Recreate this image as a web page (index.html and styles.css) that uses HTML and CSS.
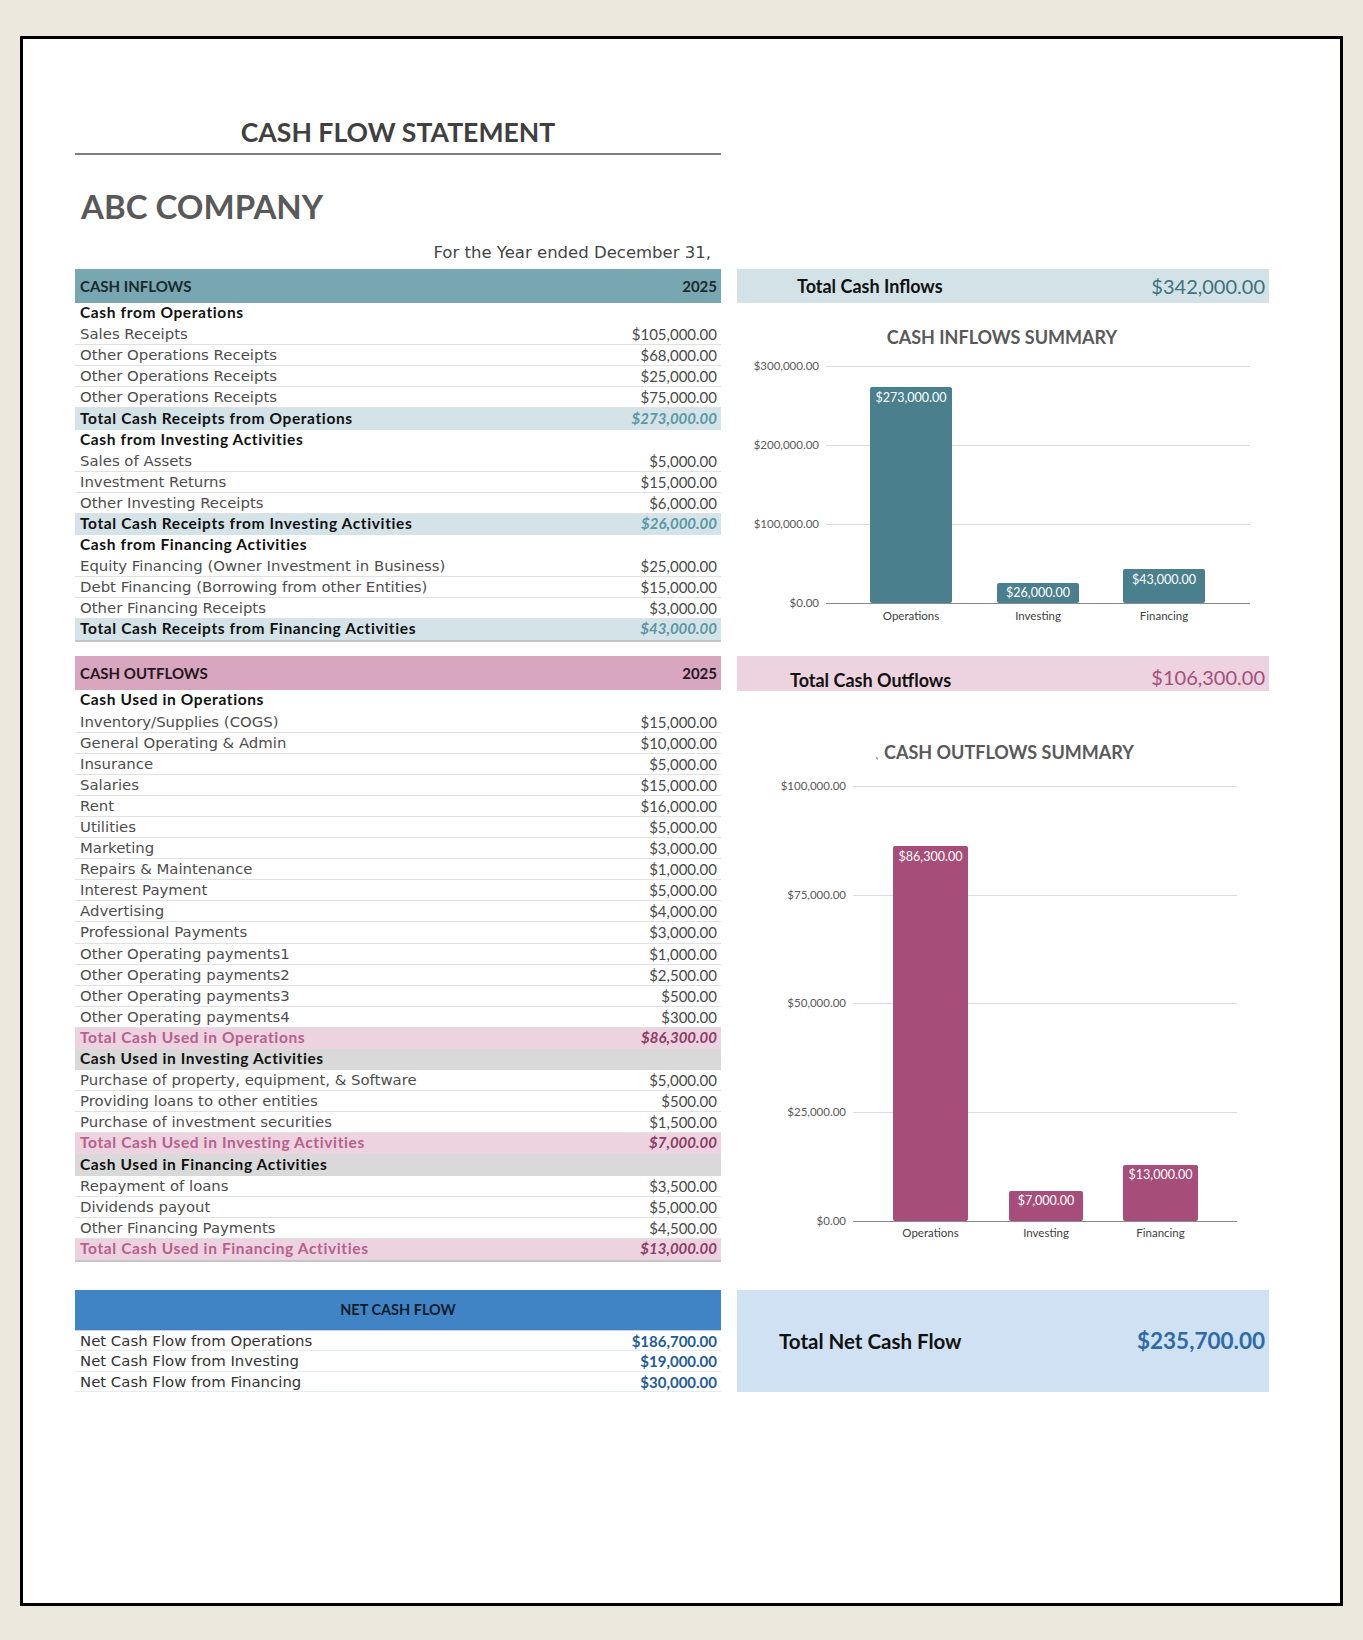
FILE: index.html
```html
<!DOCTYPE html>
<html lang="en">
<head>
<meta charset="utf-8">
<title>Cash Flow Statement</title>
<link rel="stylesheet" href="styles.css">
</head>
<body>
<div class="frame">
  <div class="sheet">
    <header class="head">
      <h1 class="title">CASH FLOW STATEMENT</h1>
      <h2 class="company">ABC COMPANY</h2>
      <p class="period">For the Year ended December 31,</p>
    </header>

    <div class="band">
      <section class="tbl">
        <div class="thead in"><span>CASH INFLOWS</span><span>2025</span></div>
        <div class="row sub"><span class="lbl">Cash from Operations</span></div>
        <div class="row item"><span class="lbl">Sales Receipts</span><span class="val">$105,000.00</span></div>
        <div class="row item"><span class="lbl">Other Operations Receipts</span><span class="val">$68,000.00</span></div>
        <div class="row item"><span class="lbl">Other Operations Receipts</span><span class="val">$25,000.00</span></div>
        <div class="row item"><span class="lbl">Other Operations Receipts</span><span class="val">$75,000.00</span></div>
        <div class="row tot-in"><span class="lbl">Total Cash Receipts from Operations</span><span class="val">$273,000.00</span></div>
        <div class="row sub"><span class="lbl">Cash from Investing Activities</span></div>
        <div class="row item"><span class="lbl">Sales of Assets</span><span class="val">$5,000.00</span></div>
        <div class="row item"><span class="lbl">Investment Returns</span><span class="val">$15,000.00</span></div>
        <div class="row item"><span class="lbl">Other Investing Receipts</span><span class="val">$6,000.00</span></div>
        <div class="row tot-in"><span class="lbl">Total Cash Receipts from Investing Activities</span><span class="val">$26,000.00</span></div>
        <div class="row sub"><span class="lbl">Cash from Financing Activities</span></div>
        <div class="row item"><span class="lbl">Equity Financing (Owner Investment in Business)</span><span class="val">$25,000.00</span></div>
        <div class="row item"><span class="lbl">Debt Financing (Borrowing from other Entities)</span><span class="val">$15,000.00</span></div>
        <div class="row item"><span class="lbl">Other Financing Receipts</span><span class="val">$3,000.00</span></div>
        <div class="row tot-in last"><span class="lbl">Total Cash Receipts from Financing Activities</span><span class="val">$43,000.00</span></div>
      </section>
      <aside class="side">
        <div class="sum-bar in"><span class="k">Total Cash Inflows</span><span class="v">$342,000.00</span></div>
        <svg class="chart" width="532" height="330" viewBox="0 0 532 330">
          <text class="ct" x="265" y="41">CASH INFLOWS SUMMARY</text>
          <line class="grid" x1="89" y1="63.5" x2="513" y2="63.5"/>
          <line class="grid" x1="89" y1="142.5" x2="513" y2="142.5"/>
          <line class="grid" x1="89" y1="221.5" x2="513" y2="221.5"/>
          <text class="ax" x="82" y="67">$300,000.00</text>
          <text class="ax" x="82" y="146">$200,000.00</text>
          <text class="ax" x="82" y="225">$100,000.00</text>
          <text class="ax" x="82" y="304">$0.00</text>
          <rect class="bar-in" x="133" y="84" width="82" height="216" rx="2"/>
          <rect class="bar-in" x="260" y="280" width="82" height="20" rx="2"/>
          <rect class="bar-in" x="386" y="266" width="82" height="34" rx="2"/>
          <line class="axis" x1="89" y1="300.5" x2="513" y2="300.5"/>
          <text class="bv" x="174" y="98.5">$273,000.00</text>
          <text class="bv" x="301" y="294">$26,000.00</text>
          <text class="bv" x="427" y="280.5">$43,000.00</text>
          <text class="cat" x="174" y="317">Operations</text>
          <text class="cat" x="301" y="317">Investing</text>
          <text class="cat" x="427" y="317">Financing</text>
        </svg>
      </aside>
    </div>

    <div class="band out">
      <section class="tbl">
        <div class="thead outh"><span>CASH OUTFLOWS</span><span>2025</span></div>
        <div class="row sub"><span class="lbl">Cash Used in Operations</span></div>
        <div class="row item"><span class="lbl">Inventory/Supplies (COGS)</span><span class="val">$15,000.00</span></div>
        <div class="row item"><span class="lbl">General Operating &amp; Admin</span><span class="val">$10,000.00</span></div>
        <div class="row item"><span class="lbl">Insurance</span><span class="val">$5,000.00</span></div>
        <div class="row item"><span class="lbl">Salaries</span><span class="val">$15,000.00</span></div>
        <div class="row item"><span class="lbl">Rent</span><span class="val">$16,000.00</span></div>
        <div class="row item"><span class="lbl">Utilities</span><span class="val">$5,000.00</span></div>
        <div class="row item"><span class="lbl">Marketing</span><span class="val">$3,000.00</span></div>
        <div class="row item"><span class="lbl">Repairs &amp; Maintenance</span><span class="val">$1,000.00</span></div>
        <div class="row item"><span class="lbl">Interest Payment</span><span class="val">$5,000.00</span></div>
        <div class="row item"><span class="lbl">Advertising</span><span class="val">$4,000.00</span></div>
        <div class="row item"><span class="lbl">Professional Payments</span><span class="val">$3,000.00</span></div>
        <div class="row item"><span class="lbl">Other Operating payments1</span><span class="val">$1,000.00</span></div>
        <div class="row item"><span class="lbl">Other Operating payments2</span><span class="val">$2,500.00</span></div>
        <div class="row item"><span class="lbl">Other Operating payments3</span><span class="val">$500.00</span></div>
        <div class="row item"><span class="lbl">Other Operating payments4</span><span class="val">$300.00</span></div>
        <div class="row tot-out"><span class="lbl">Total Cash Used in Operations</span><span class="val">$86,300.00</span></div>
        <div class="row sub grey"><span class="lbl">Cash Used in Investing Activities</span></div>
        <div class="row item"><span class="lbl">Purchase of property, equipment, &amp; Software</span><span class="val">$5,000.00</span></div>
        <div class="row item"><span class="lbl">Providing loans to other entities</span><span class="val">$500.00</span></div>
        <div class="row item"><span class="lbl">Purchase of investment securities</span><span class="val">$1,500.00</span></div>
        <div class="row tot-out"><span class="lbl">Total Cash Used in Investing Activities</span><span class="val">$7,000.00</span></div>
        <div class="row sub grey"><span class="lbl">Cash Used in Financing Activities</span></div>
        <div class="row item"><span class="lbl">Repayment of loans</span><span class="val">$3,500.00</span></div>
        <div class="row item"><span class="lbl">Dividends payout</span><span class="val">$5,000.00</span></div>
        <div class="row item"><span class="lbl">Other Financing Payments</span><span class="val">$4,500.00</span></div>
        <div class="row tot-out last"><span class="lbl">Total Cash Used in Financing Activities</span><span class="val">$13,000.00</span></div>
      </section>
      <aside class="side">
        <div class="sum-bar outb"><span class="k">Total Cash Outflows</span><span class="v">$106,300.00</span></div>
        <svg class="chart" width="532" height="560" viewBox="0 0 532 560">
          <line class="tick" x1="139.5" y1="66" x2="140.5" y2="68.5"/>
          <text class="ct" x="272" y="67.5">CASH OUTFLOWS SUMMARY</text>
          <line class="grid" x1="116" y1="95.5" x2="500" y2="95.5"/>
          <line class="grid" x1="116" y1="204.5" x2="500" y2="204.5"/>
          <line class="grid" x1="116" y1="312.5" x2="500" y2="312.5"/>
          <line class="grid" x1="116" y1="421.5" x2="500" y2="421.5"/>
          <text class="ax" x="109" y="99">$100,000.00</text>
          <text class="ax" x="109" y="208">$75,000.00</text>
          <text class="ax" x="109" y="316">$50,000.00</text>
          <text class="ax" x="109" y="425">$25,000.00</text>
          <text class="ax" x="109" y="534">$0.00</text>
          <rect class="bar-out" x="156" y="155" width="75" height="375" rx="2"/>
          <rect class="bar-out" x="272" y="500" width="74" height="30" rx="2"/>
          <rect class="bar-out" x="386" y="474" width="75" height="56" rx="2"/>
          <line class="axis" x1="116" y1="530.5" x2="500" y2="530.5"/>
          <text class="bv" x="193.5" y="170">$86,300.00</text>
          <text class="bv" x="309" y="514">$7,000.00</text>
          <text class="bv" x="423.5" y="488">$13,000.00</text>
          <text class="cat" x="193.5" y="546">Operations</text>
          <text class="cat" x="309" y="546">Investing</text>
          <text class="cat" x="423.5" y="546">Financing</text>
        </svg>
      </aside>
    </div>

    <div class="band net">
      <section class="tbl">
        <div class="nhead">NET CASH FLOW</div>
        <div class="row nrow"><span class="lbl">Net Cash Flow from Operations</span><span class="val">$186,700.00</span></div>
        <div class="row nrow"><span class="lbl">Net Cash Flow from Investing</span><span class="val">$19,000.00</span></div>
        <div class="row nrow"><span class="lbl">Net Cash Flow from Financing</span><span class="val">$30,000.00</span></div>
      </section>
      <aside class="side">
        <div class="net-box"><span class="k">Total Net Cash Flow</span><span class="v">$235,700.00</span></div>
      </aside>
    </div>
  </div>
</div>
</body>
</html>
```

FILE: styles.css
```css
* { box-sizing: border-box; }

body {
  margin: 0;
  background: #ece8de;
  padding: 36px 20px 34px;
}

.frame {
  border: 3px solid #000;
  background: #fff;
  height: 1570px;
}

.sheet {
  padding: 77px 71px 0 52px;
}

.head { width: 646px; }

.title {
  margin: 0;
  padding-bottom: 5px;
  border-bottom: 2px solid #7f7f7f;
  font: 700 26.6px/32px Lato, sans-serif;
  color: #404040;
  text-align: center;
}

.company {
  margin: 31px 0 0;
  padding-left: 6px;
  font: 700 33px/40px Lato, sans-serif;
  color: #595959;
}

.period {
  margin: 17px 0 0;
  padding-right: 10px;
  text-align: right;
  font: 16.5px/20px "DejaVu Sans", sans-serif;
  color: #454545;
}

.band {
  display: flex;
  gap: 16px;
  align-items: flex-start;
  margin-top: 6px;
}
.band.out { margin-top: 14px; }
.band.net { margin-top: 28px; }

.tbl { width: 646px; flex: none; }
.side { width: 532px; flex: none; }

.thead {
  height: 34px;
  display: flex;
  align-items: center;
  justify-content: space-between;
  padding: 0 4px 0 5px;
  font: 700 15px Lato, sans-serif;
  color: #1b2a2f;
}
.thead.in { background: #78a6b1; }
.thead.outh { background: #d8a6bf; color: #241820; }

.row {
  height: 21.1px;
  display: flex;
  align-items: center;
  justify-content: space-between;
  padding: 0 4px 0 5px;
  white-space: nowrap;
}

.lbl {
  font: 14.9px "DejaVu Sans", sans-serif;
  color: #4d4d4d;
}
.val {
  font: 15px Lato, sans-serif;
  color: #4a4a4a;
}

.item { border-bottom: 1px solid #e1e1e1; }

.sub,
.tot-in,
.tot-out { padding-bottom: 3px; }

.sub .lbl,
.tot-in .lbl,
.tot-out .lbl {
  font: 700 15.5px Lato, sans-serif;
  letter-spacing: 0.62px;
  color: #111;
}

.sub.grey { background: #d9d9d9; }

.tot-in { background: #d4e3e7; }
.tot-in .val {
  font: italic 700 15px Lato, sans-serif;
  color: #5b97a6;
}

.tot-out { background: #ecd3df; }
.tot-out .lbl { color: #b8608e; }
.tot-out .val {
  font: italic 700 15px Lato, sans-serif;
  color: #8e3c67;
}

.last { border-bottom: 2px solid #c6c6c6; height: 23px; }

.sum-bar {
  display: flex;
  align-items: center;
  justify-content: space-between;
  padding: 0 4px 0 60px;
}
.sum-bar.in { height: 34px; background: #d3e2e6; }
.sum-bar.outb { height: 35px; background: #ecd3df; padding: 12px 4px 0 53px; }
.sum-bar.outb .v { padding-bottom: 5px; }

.sum-bar .k,
.net-box .k {
  font: 700 18px Lato, sans-serif;
  color: #111;
}
.sum-bar .v { font: 20px Lato, sans-serif; }
.sum-bar.in .v { color: #3d7282; }
.sum-bar.outb .v { color: #a44f7e; }

.chart { display: block; }
.chart text { font-family: Lato, sans-serif; }
.chart .ct { font-size: 18px; font-weight: 700; fill: #595959; text-anchor: middle; }
.chart .ax { font-size: 11.5px; fill: #595959; text-anchor: end; }
.chart .cat { font-size: 11.5px; fill: #404040; text-anchor: middle; }
.chart .bv { font-size: 12.5px; fill: #fff; text-anchor: middle; }
.chart .grid { stroke: #dcdcdc; stroke-width: 1; }
.chart .axis { stroke: #8a8a8a; stroke-width: 1.2; }
.chart .tick { stroke: #8a8a8a; stroke-width: 1.2; }
.chart .bar-in { fill: #4a808d; }
.chart .bar-out { fill: #a64d79; }

.nhead {
  height: 41px;
  display: flex;
  align-items: center;
  justify-content: center;
  background: #4184c6;
  border-bottom: 1px solid #c7d3de;
  font: 700 14.5px Lato, sans-serif;
  color: #0f1d2b;
}
.nrow {
  height: 20.5px;
  border-bottom: 1px solid #e3ebf3;
}
.nrow .lbl { color: #333; }
.nrow .val {
  font: 700 15px Lato, sans-serif;
  color: #1f5c9a;
}

.net-box {
  height: 102px;
  display: flex;
  align-items: center;
  justify-content: space-between;
  padding: 0 4px 0 42px;
  background: #cfe1f2;
}
.net-box .k { font-size: 20.5px; }
.net-box .v {
  font: 700 22.5px Lato, sans-serif;
  color: #2d6ba7;
}
```
